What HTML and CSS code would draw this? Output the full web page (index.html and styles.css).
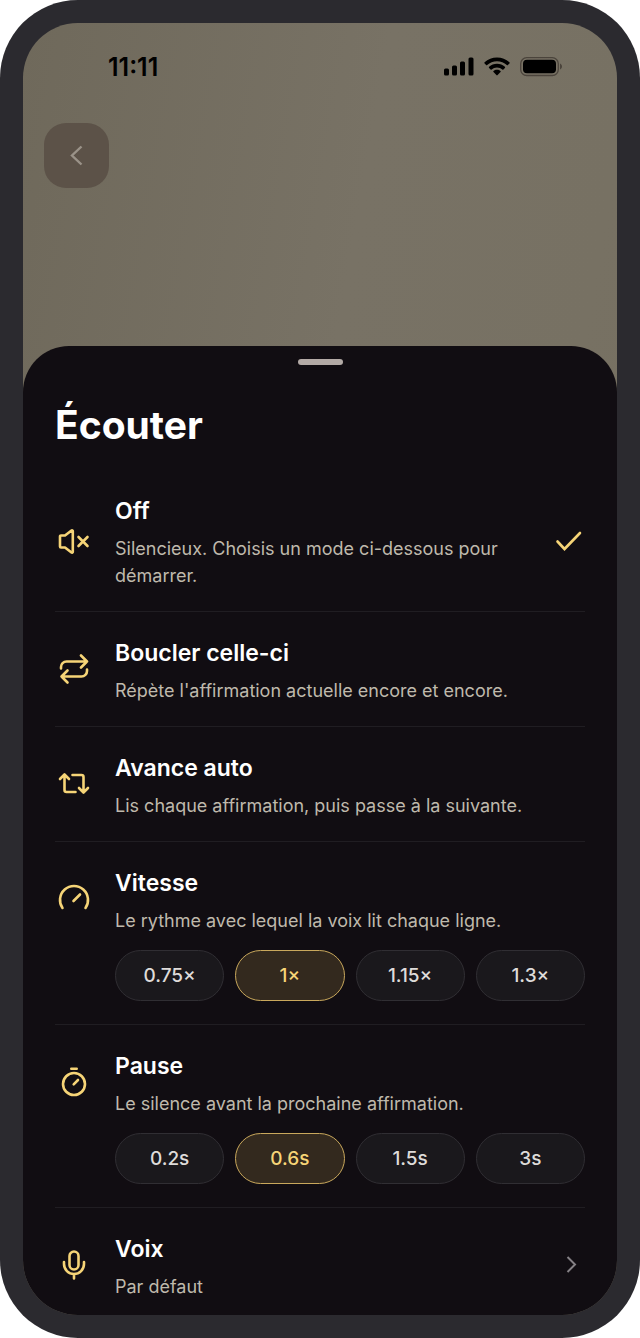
FILE: index.html
```
<!DOCTYPE html>
<html lang="fr">
<head>
  <meta charset="UTF-8">
  <meta name="viewport" content="width=device-width, initial-scale=1">
  <title>Écouter</title>
  <link rel="stylesheet" href="styles.css">
</head>
<body>
  <div class="phone">
    <div class="screen">
      <header class="status-bar">
        <span class="time">11:11</span>
        <div class="status-icons">
          <svg width="30" height="20" viewBox="0 0 30 20">
            <rect x="0" y="11.500" width="5" height="7" rx="1.5"/>
            <rect x="8" y="8.500" width="5" height="10" rx="1.5"/>
            <rect x="16" y="4.500" width="5" height="14" rx="1.5"/>
            <rect x="24.500" y="0.500" width="5" height="18" rx="1.5"/>
          </svg>
          <svg width="26" height="20" viewBox="0 0 26 20">
            <path d="M13 .5C8.200.5 3.900 2.300.6 5.300c-.4.4-.4.8 0 1.200l1.500 1.500c.3.3.7.3 1.100 0C5.800 5.600 9.200 4.200 13 4.200s7.200 1.400 9.800 3.800c.4.3.8.3 1.100 0l1.500-1.500c.4-.4.4-.8 0-1.200C22.100 2.300 17.800.5 13 .5z"/>
            <path d="M13 6.700c-3 0-5.800 1.100-7.900 3-.4.4-.4.8 0 1.200l1.500 1.500c.3.300.7.300 1.100 0 1.400-1.200 3.200-2 5.300-2s3.900.8 5.300 2c.4.300.8.300 1.100 0l1.500-1.500c.4-.4.4-.8 0-1.200-2.100-1.900-4.900-3-7.900-3z"/>
            <path d="M13 12.700c-1.400 0-2.600.5-3.500 1.200-.4.400-.4.800 0 1.200l2.900 3c.4.400.8.400 1.200 0l2.900-3c.4-.4.4-.8 0-1.200-.9-.7-2.100-1.200-3.500-1.200z"/>
          </svg>
          <svg width="42" height="20" viewBox="0 0 42 20">
            <rect x="0.700" y="0.700" width="37.600" height="17.800" rx="6" fill="none" stroke="#4b443c" stroke-width="1.300"/>
            <rect x="3" y="2.800" width="33" height="13.500" rx="4"/>
            <path d="M40 6.500v6c1.200-.5 2-1.600 2-3s-.8-2.500-2-3z" fill="#4b443c"/>
          </svg>
        </div>
      </header>

      <button class="back" type="button" aria-label="Retour">
        <svg width="24" height="24" viewBox="0 0 24 24"><path d="M16.500 2.500L7 11.500l9.500 9"/></svg>
      </button>

      <main class="sheet">
        <div class="grabber"></div>
        <h1>Écouter</h1>

        <button class="row" type="button">
          <svg class="icon" viewBox="0 0 32 32">
            <path d="M2 10.500a1 1 0 0 1 1-1h4l6.500-5a.8.800 0 0 1 1.300.6v20.800a.8.800 0 0 1-1.300.6L7 21.500H3a1 1 0 0 1-1-1z"/>
            <path d="M20.500 11l9 9M29.500 11l-9 9"/>
          </svg>
          <span class="text">
            <span class="name">Off</span>
            <span class="desc">Silencieux. Choisis un mode ci-dessous pour démarrer.</span>
          </span>
          <svg class="check" viewBox="0 0 32 32"><path d="M4.500 15.500l7 7.500L27 7"/></svg>
        </button>

        <button class="row" type="button">
          <svg class="icon" viewBox="0 0 32 32">
            <path d="M23 1.500l6 6-6 6M29 7.500H8.500a5.500 5.500 0 0 0-5.500 5.500v1.500"/>
            <path d="M9.500 28.500l-6-6 6-6M3.500 22.500h20a5.500 5.500 0 0 0 5.500-5.500v-1.500"/>
          </svg>
          <span class="text">
            <span class="name">Boucler celle-ci</span>
            <span class="desc">Répète l'affirmation actuelle encore et encore.</span>
          </span>
        </button>

        <button class="row" type="button">
          <svg class="icon" viewBox="0 0 32 32">
            <path d="M2 10l4.500-4.500L11 10M6.500 6v15a2 2 0 0 0 2 2H17.500"/>
            <path d="M30 19l-4.500 4.500L21 19M25.500 23V8a2 2 0 0 0-2-2H14.500"/>
          </svg>
          <span class="text">
            <span class="name">Avance auto</span>
            <span class="desc">Lis chaque affirmation, puis passe à la suivante.</span>
          </span>
        </button>

        <section class="row">
          <svg class="icon" viewBox="0 0 32 32">
            <path d="M4.500 24A14 14 0 1 1 27.500 24M15.500 17l6.500-6.500"/>
          </svg>
          <div class="text">
            <h2 class="name">Vitesse</h2>
            <p class="desc">Le rythme avec lequel la voix lit chaque ligne.</p>
          </div>
          <div class="pills">
            <label class="pill"><input type="radio" name="vitesse"><span>0.75×</span></label>
            <label class="pill"><input type="radio" name="vitesse" checked><span>1×</span></label>
            <label class="pill"><input type="radio" name="vitesse"><span>1.15×</span></label>
            <label class="pill"><input type="radio" name="vitesse"><span>1.3×</span></label>
          </div>
        </section>

        <section class="row">
          <svg class="icon" viewBox="0 0 32 32">
            <circle cx="16" cy="17" r="11"/>
            <path d="M13.300 1.800h5.400M15.700 17.300l4.300-4.300"/>
          </svg>
          <div class="text">
            <h2 class="name">Pause</h2>
            <p class="desc">Le silence avant la prochaine affirmation.</p>
          </div>
          <div class="pills">
            <label class="pill"><input type="radio" name="pause"><span>0.2s</span></label>
            <label class="pill"><input type="radio" name="pause" checked><span>0.6s</span></label>
            <label class="pill"><input type="radio" name="pause"><span>1.5s</span></label>
            <label class="pill"><input type="radio" name="pause"><span>3s</span></label>
          </div>
        </section>

        <button class="row" type="button">
          <svg class="icon" viewBox="0 0 32 32">
            <rect x="11.500" y="1.500" width="9" height="18" rx="4.500"/>
            <path d="M6 12v2a10 10 0 0 0 20 0v-2M16 24v4.500"/>
          </svg>
          <span class="text">
            <span class="name">Voix</span>
            <span class="desc">Par défaut</span>
          </span>
          <svg class="chevron" viewBox="0 0 24 24"><path d="M6.500 3l7.500 7.500L6.500 18"/></svg>
        </button>
      </main>
    </div>
  </div>
</body>
</html>
```
FILE: styles.css
```
* {
  box-sizing: border-box;
}

body {
  margin: 0;
  background-color: #fff;
  font-family: Inter, "Liberation Sans", sans-serif;
}

h1, h2, p {
  margin: 0;
}

button {
  font: inherit;
  border: 0;
  cursor: pointer;
}

/* Phone frame */
.phone {
  display: flex;
  min-height: 100vh;
  padding: 23px;
  background-color: #2b2a2f;
  border-radius: 78px;
}

.screen {
  flex: 1;
  display: flex;
  flex-direction: column;
  overflow: hidden;
  border-radius: 55px;
  background: linear-gradient(100deg, #6f695b, #787265 45%, #777163 75%, #766f60);
}

.status-bar {
  display: flex;
  justify-content: space-between;
  align-items: center;
  padding: 28px 55px 0 85px;
}

.time {
  font-size: 25px;
  font-weight: 600;
  line-height: 32px;
  color: #000;
}

.status-icons {
  display: flex;
  gap: 10px;
}

.back {
  display: flex;
  align-items: center;
  justify-content: center;
  width: 65px;
  height: 65px;
  margin: 40px 0 158px 21px;
  border-radius: 22px;
  background-color: #5c5248;
}

.back svg {
  fill: none;
  stroke: #9a9288;
  stroke-width: 2.4;
}

/* Bottom sheet */
.sheet {
  flex: 1;
  padding: 13px 32px 0;
  border-radius: 46px 46px 0 0;
  background-color: #110d12;
}

.grabber {
  width: 45px;
  height: 6px;
  margin: 0 auto;
  border-radius: 3px;
  background-color: #b3aaa6;
}

h1 {
  margin: 36px 0 21px;
  font-size: 39px;
  font-weight: 700;
  line-height: 48px;
  color: #fff;
}

.row {
  display: grid;
  grid-template-columns: 38px 1fr auto;
  column-gap: 22px;
  align-items: center;
  width: 100%;
  padding: 24px 0 22px;
  border-bottom: 1px solid #201d22;
  background: none;
  text-align: left;
}

section.row {
  padding-bottom: 23px;
}

.row:last-child {
  padding-bottom: 14px;
  border-bottom: 0;
}

.icon {
  width: 32px;
  height: 32px;
  justify-self: center;
  fill: none;
  stroke: #f6d477;
  stroke-width: 2.6;
  stroke-linecap: round;
  stroke-linejoin: round;
}

.text {
  display: flex;
  flex-direction: column;
  gap: 6px;
}

.name {
  font-size: 23px;
  font-weight: 600;
  line-height: 35px;
  color: #fff;
}

.desc {
  font-size: 18px;
  line-height: 27px;
  color: #bfb9ac;
}

.check {
  width: 32px;
  height: 32px;
  fill: none;
  stroke: #f6d477;
  stroke-width: 2.6;
  stroke-linecap: round;
}

.chevron {
  width: 24px;
  height: 24px;
  fill: none;
  stroke: #858185;
  stroke-width: 2;
}

/* Choice pills */
.pills {
  grid-column: 2 / -1;
  display: grid;
  grid-template-columns: repeat(4, 1fr);
  gap: 11px;
  margin-top: 16px;
}

.pill input {
  appearance: none;
  position: absolute;
  margin: 0;
}

.pill span {
  display: block;
  border: 1px solid #302e33;
  border-radius: 26px;
  background-color: #1a181c;
  font-size: 19px;
  font-weight: 500;
  line-height: 49px;
  text-align: center;
  color: #dedbd9;
  cursor: pointer;
}

.pill input:checked + span {
  border-color: #c9a85c;
  background-color: #33291e;
  color: #f6d477;
}
```
